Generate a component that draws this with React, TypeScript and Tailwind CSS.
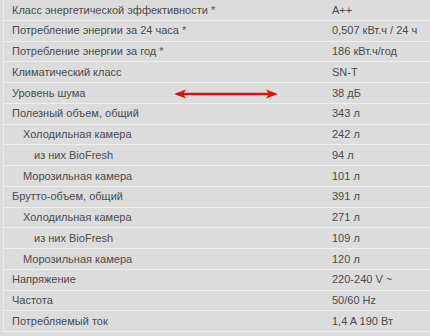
import React from 'react';

const rows = [
  { label: 'Класс энергетической эффективности', star: true, value: 'A++', indent: 0 },
  { label: 'Потребление энергии за 24 часа', star: true, value: '0,507 кВт.ч / 24 ч', indent: 0 },
  { label: 'Потребление энергии за год', star: true, value: '186 кВт.ч/год', indent: 0 },
  { label: 'Климатический класс', value: 'SN-T', indent: 0 },
  { label: 'Уровень шума', value: '38 дБ', indent: 0, arrow: true },
  { label: 'Полезный объем, общий', value: '343 л', indent: 0 },
  { label: 'Холодильная камера', value: '242 л', indent: 1 },
  { label: 'из них BioFresh', value: '94 л', indent: 2 },
  { label: 'Морозильная камера', value: '101 л', indent: 1 },
  { label: 'Брутто-объем, общий', value: '391 л', indent: 0 },
  { label: 'Холодильная камера', value: '271 л', indent: 1 },
  { label: 'из них BioFresh', value: '109 л', indent: 2 },
  { label: 'Морозильная камера', value: '120 л', indent: 1 },
  { label: 'Напряжение', value: '220-240 V ~', indent: 0 },
  { label: 'Частота', value: '50/60 Hz', indent: 0 },
  { label: 'Потребляемый ток', value: '1,4 A 190 Вт', indent: 0 },
];

const indentClass = ['pl-[8px]', 'pl-[19px]', 'pl-[30px]'];

function Arrow() {
  return (
    <svg className="absolute left-[170px] top-[6px]" width="104" height="10" viewBox="0 0 104 10">
      <line x1="8" y1="5" x2="96" y2="5" stroke="#e01010" strokeWidth="2.5" />
      <polygon points="0,5 12,0.5 9,5 12,9.5" fill="#e01010" />
      <polygon points="104,5 92,0.5 95,5 92,9.5" fill="#e01010" />
    </svg>
  );
}

export default function App() {
  return (
    <div className="h-[336px] w-[430px] overflow-hidden bg-[#dcdcdc] font-['Liberation_Sans',Arial,sans-serif] text-[11px] text-[#4a4a4a]">
      <div className="ml-[3px] border-l border-[#ececec]">
        {rows.map((row, i) => (
          <div key={i} className="relative flex h-[20.75px] items-center border-b border-[#efefef]">
            <div className={`w-[328px] ${indentClass[row.indent]}`}>
              {row.label}
              {row.star && <span className="text-[#555]"> *</span>}
            </div>
            <div>{row.value}</div>
            {row.arrow && <Arrow />}
          </div>
        ))}
      </div>
    </div>
  );
}
